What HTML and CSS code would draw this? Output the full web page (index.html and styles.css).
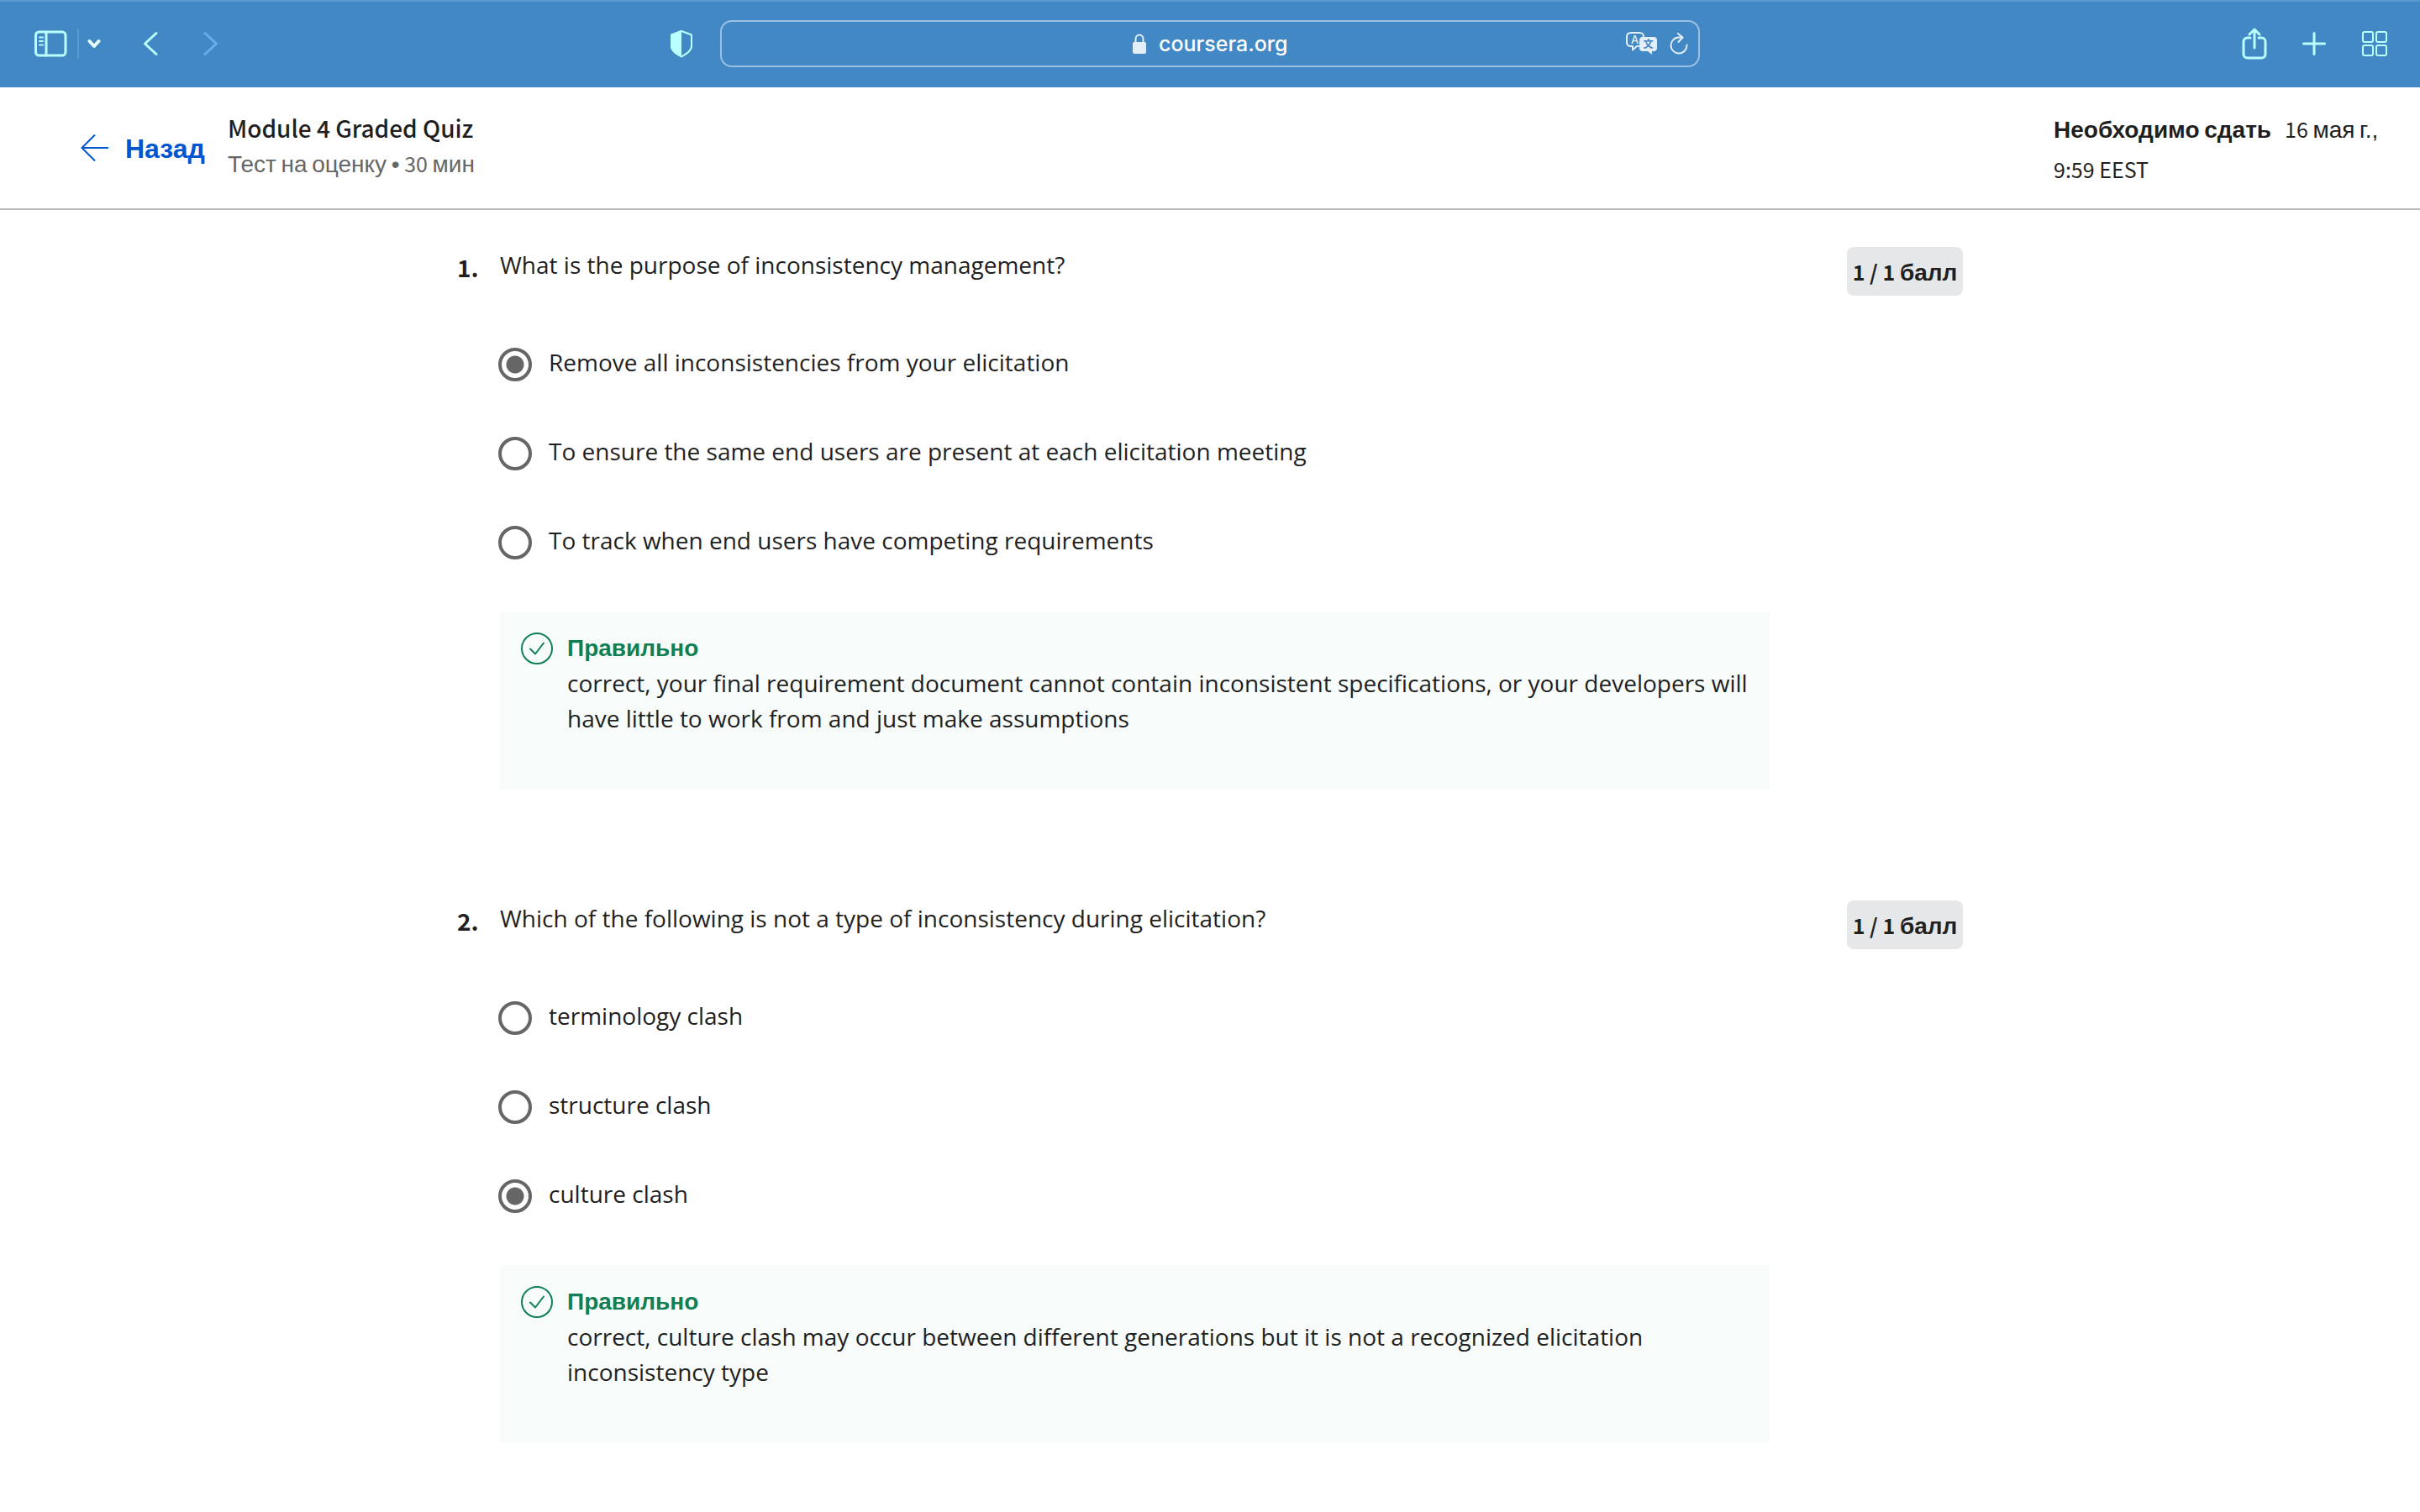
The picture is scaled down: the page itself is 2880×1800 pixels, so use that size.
FILE: index.html
```html
<!DOCTYPE html>
<html lang="ru">
<head>
<meta charset="utf-8">
<title>Module 4 Graded Quiz</title>
<meta name="viewport" content="width=device-width, initial-scale=1">
<link rel="stylesheet" href="styles.css">
</head>
<body>
<nav class="toolbar" aria-label="Browser">
  <div class="toolbar-side toolbar-start">
    <button class="tool" aria-label="Sidebar"><svg width="40" height="32" viewBox="0 0 40 32"><rect x="2.500" y="2" width="35.500" height="28" rx="4"/><path d="M15 2v28"/><path class="thin" d="M7 8.500h4M7 13h4M7 17.500h4"/></svg></button>
    <span class="divider"></span>
    <button class="tool tool-menu" aria-label="Tab groups"><svg class="bright" width="16" height="12" viewBox="0 0 16 12"><path d="M2.500 3l5.500 6 5.500-6"/></svg></button>
    <button class="tool tool-back" aria-label="Back"><svg width="18" height="30" viewBox="0 0 18 30"><path d="M16 2.500L2.500 15 16 27.500"/></svg></button>
    <button class="tool tool-forward" aria-label="Forward" disabled><svg width="18" height="30" viewBox="0 0 18 30"><path d="M2 2.500L15.500 15 2 27.500"/></svg></button>
    <button class="tool tool-shield" aria-label="Privacy report"><svg width="28" height="34" viewBox="0 0 28 34"><path class="thin" d="M14 2L2 6.500v13c0 6 6 9.500 12 13 6-3.500 12-7 12-13v-13z"/><path class="solid" d="M14 1L1 6v14c0 6 6 9.500 13 13z"/></svg></button>
  </div>
  <div class="address">
    <label class="site"><svg width="18" height="24" viewBox="0 0 18 24"><rect class="solid" x="1" y="10" width="16" height="14" rx="2"/><path class="thin" d="M4.500 10V6.500a4.500 5 0 0 1 9 0V10"/></svg><input class="site-input" type="text" value="coursera.org" aria-label="Address"></label>
    <div class="address-tools">
      <button class="tool" aria-label="Translate"><svg width="38" height="28" viewBox="0 0 38 28"><path class="thin" d="M15 17h-2l-5 4.500V17H5.500A4.500 4.500 0 0 1 1 12.500v-7A4.500 4.500 0 0 1 5.500 1h11A4.500 4.500 0 0 1 21 5.500V6"/><path class="solid" d="M20 6h13a4 4 0 0 1 4 4v9a4 4 0 0 1-4 4h-2v4l-5-4h-6a4 4 0 0 1-4-4v-9a4 4 0 0 1 4-4z"/><text class="latin" x="10.500" y="13.500">A</text><text class="han" x="26.500" y="19">文</text></svg></button>
      <button class="tool" aria-label="Reload"><svg width="22" height="26" viewBox="0 0 22 26"><path class="thin" d="M20.500 14.500A9.500 9.500 0 1 1 11 5.500h4M10 1l5.500 4.500L10.500 11"/></svg></button>
    </div>
  </div>
  <div class="toolbar-side toolbar-end">
    <button class="tool" aria-label="Share"><svg width="30" height="38" viewBox="0 0 30 38"><path d="M10 12H6.500A4.500 4.500 0 0 0 2 16.500v15A4.500 4.500 0 0 0 6.500 36h17a4.500 4.500 0 0 0 4.500-4.500v-15a4.500 4.500 0 0 0-4.500-4.500H20M15 24V2.500M9 8l6-6 6 6"/></svg></button>
    <button class="tool" aria-label="New tab"><svg width="28" height="28" viewBox="0 0 28 28"><path d="M14 1.500v25M1.500 14h25"/></svg></button>
    <button class="tool" aria-label="Tab overview"><svg width="32" height="32" viewBox="0 0 32 32"><g class="thin"><rect x="2" y="2" width="12" height="12" rx="2"/><rect x="18" y="2" width="12" height="12" rx="2"/><rect x="2" y="18" width="12" height="12" rx="2"/><rect x="18" y="18" width="12" height="12" rx="2"/></g></svg></button>
  </div>
</nav>

<header class="quiz-header">
  <a class="back" href="#"><svg width="34" height="34" viewBox="0 0 34 34"><path d="M33 17H1.500M17 1.500L1.500 17 17 32.500"/></svg><span class="back-text">Назад</span></a>
  <div class="heading">
    <h1 class="title">Module 4 Graded Quiz</h1>
    <p class="subtitle">Тест<span class="latin-run"> </span>на<span class="latin-run"> </span>оценку<span class="latin-run"> </span>•<span class="latin-run"> 30 </span>мин</p>
  </div>
  <p class="due"><strong class="due-label">Необходимо<span class="latin-run"> </span>сдать</strong><span class="latin-run">16 </span>мая<span class="latin-run"> </span>г., <span class="latin-run">9:59 EEST</span></p>
</header>

<main class="quiz">
  <section class="question">
    <h2 class="number">1.</h2>
    <div class="content">
      <fieldset class="answers">
        <legend class="prompt">What is the purpose of inconsistency management?</legend>
        <label class="option"><input class="radio" type="radio" name="q1" checked>Remove all inconsistencies from your elicitation</label>
        <label class="option"><input class="radio" type="radio" name="q1">To ensure the same end users are present at each elicitation meeting</label>
        <label class="option"><input class="radio" type="radio" name="q1">To track when end users have competing requirements</label>
      </fieldset>
      <div class="feedback">
        <svg class="check" width="40" height="40" viewBox="0 0 40 40"><circle cx="20" cy="20" r="18"/><path d="M12 20.500l6 6 10-13"/></svg>
        <div>
          <h3 class="verdict">Правильно</h3>
          <p class="note">correct, your final requirement document cannot contain inconsistent specifications, or your developers will have little to work from and just make assumptions</p>
        </div>
      </div>
    </div>
    <p class="points"><span class="latin-run">1 / 1 </span>балл</p>
  </section>

  <section class="question">
    <h2 class="number">2.</h2>
    <div class="content">
      <fieldset class="answers">
        <legend class="prompt">Which of the following is not a type of inconsistency during elicitation?</legend>
        <label class="option"><input class="radio" type="radio" name="q2">terminology clash</label>
        <label class="option"><input class="radio" type="radio" name="q2">structure clash</label>
        <label class="option"><input class="radio" type="radio" name="q2" checked>culture clash</label>
      </fieldset>
      <div class="feedback">
        <svg class="check" width="40" height="40" viewBox="0 0 40 40"><circle cx="20" cy="20" r="18"/><path d="M12 20.500l6 6 10-13"/></svg>
        <div>
          <h3 class="verdict">Правильно</h3>
          <p class="note">correct, culture clash may occur between different generations but it is not a recognized elicitation inconsistency type</p>
        </div>
      </div>
    </div>
    <p class="points"><span class="latin-run">1 / 1 </span>балл</p>
  </section>
</main>
</body>
</html>
```
FILE: styles.css
```css
:root {
  --toolbar: #4288c5;
  --tint: #b9ffff;
  --ink: #1f1f1f;
  --grey: #666;
  --blue: #0056d2;
  --green: #0f7f54;
  --latin: "Noto Sans CJK SC", sans-serif;
  --cyrillic: "Liberation Sans", sans-serif;
  --body: "Open Sans", sans-serif;
}

* { box-sizing: border-box; }

body, h1, h2, h3, p { margin: 0; }

body {
  background: #fff;
  color: var(--ink);
  font-family: var(--cyrillic);
  font-size: 28px;
}

svg { display: block; flex: none; fill: none; stroke: currentColor; stroke-width: 3; stroke-linecap: round; stroke-linejoin: round; }
.thin { stroke-width: 2; }
.solid { fill: currentColor; stroke: none; }
.bright { color: #e9ffff; stroke-width: 4; }

/* Browser toolbar */
.toolbar {
  display: grid;
  grid-template-columns: 1fr minmax(0, 1166px) 1fr;
  height: 104px;
  padding: 0 38px;
  background: var(--toolbar);
  box-shadow: inset 0 2px #5e99cf;
  color: var(--tint);
  align-items: center;
}
.toolbar-side { display: flex; align-items: center; }
.toolbar-start { padding-left: 2px; }
.toolbar-end { justify-content: flex-end; gap: 42px; }
.tool { padding: 0; border: 0; background: none; color: inherit; }
.tool:disabled { color: #66aeea; }
.divider { width: 2px; height: 36px; margin: 0 10px 0 12px; background: #5c9bd6; }
.tool-back { margin-left: 50px; }
.tool-forward { margin-left: 54px; }
.tool-shield { margin: 0 32px 0 auto; }

.address {
  display: grid;
  grid-template-columns: 1fr auto 1fr;
  align-items: center;
  height: 56px;
  border: 2px solid #9cc0e1;
  border-radius: 14px;
  color: #e3eef7;
}
.site { grid-column: 2; display: flex; align-items: center; gap: 14px; }
.site-input {
  width: 154px;
  padding: 0;
  border: 0;
  background: none;
  color: #fff;
  font: 500 25px/32px Inter, sans-serif;
}
.address-tools { display: flex; justify-content: flex-end; align-items: center; gap: 14px; padding-right: 12px; }
.latin, .han { stroke: none; text-anchor: middle; }
.latin { fill: currentColor; font: 500 13px Inter, sans-serif; }
.han { fill: var(--toolbar); font: 700 12px "Noto Sans CJK SC", sans-serif; }

/* Quiz header */
.quiz-header {
  display: flex;
  align-items: center;
  height: 146px;
  padding: 0 36px 0 96px;
  border-bottom: 2px solid #bbb;
}
.back { display: flex; align-items: center; gap: 19px; color: var(--blue); font-size: 32px; font-weight: 700; text-decoration: none; }
.back svg { stroke-width: 2; stroke-linecap: butt; stroke-linejoin: miter; }
.back-text { width: 92px; padding-top: 2px; }
.heading { margin-left: 30px; padding-bottom: 4px; line-height: 44px; }
.title { font: 500 28px/44px var(--latin); }
.subtitle { color: var(--grey); }
.latin-run { font-family: var(--latin); font-size: 25px; line-height: 1; }
.due { width: 400px; margin-left: auto; padding-top: 6px; line-height: 48px; }
.due-label { margin-right: 16px; }

/* Questions */
.quiz { display: flex; flex-direction: column; gap: 132px; max-width: 1792px; margin: 0 auto; padding: 44px 0 82px; }
.question { display: grid; grid-template-columns: 51px minmax(0, 1fr) 138px; align-items: start; }
.number { font: 700 28px/48px var(--latin); }
.content { margin-right: 92px; font: 28px/42px var(--body); }
.answers { display: flex; flex-direction: column; gap: 62px; min-width: 0; margin: 0; padding: 0 0 62px; border: 0; }
.prompt { padding: 0 0 74px; }
.option { display: flex; gap: 20px; margin-left: -2px; }
.radio {
  appearance: none;
  flex: none;
  width: 40px;
  height: 40px;
  margin: 4px 0 0;
  border: 4px solid var(--grey);
  border-radius: 50%;
}
.radio:checked { background: radial-gradient(circle, var(--grey) 10px, transparent 11px); }
.feedback { display: flex; gap: 16px; padding: 24px 24px 64px; background: #f7fbf9; }
.check { color: var(--green); stroke-width: 2; }
.verdict { color: var(--green); font: 700 28px/40px var(--cyrillic); }
.points { padding-top: 4px; border-radius: 8px; background: #e5e7e8; font-weight: 700; line-height: 54px; text-align: center; white-space: nowrap; }
```
